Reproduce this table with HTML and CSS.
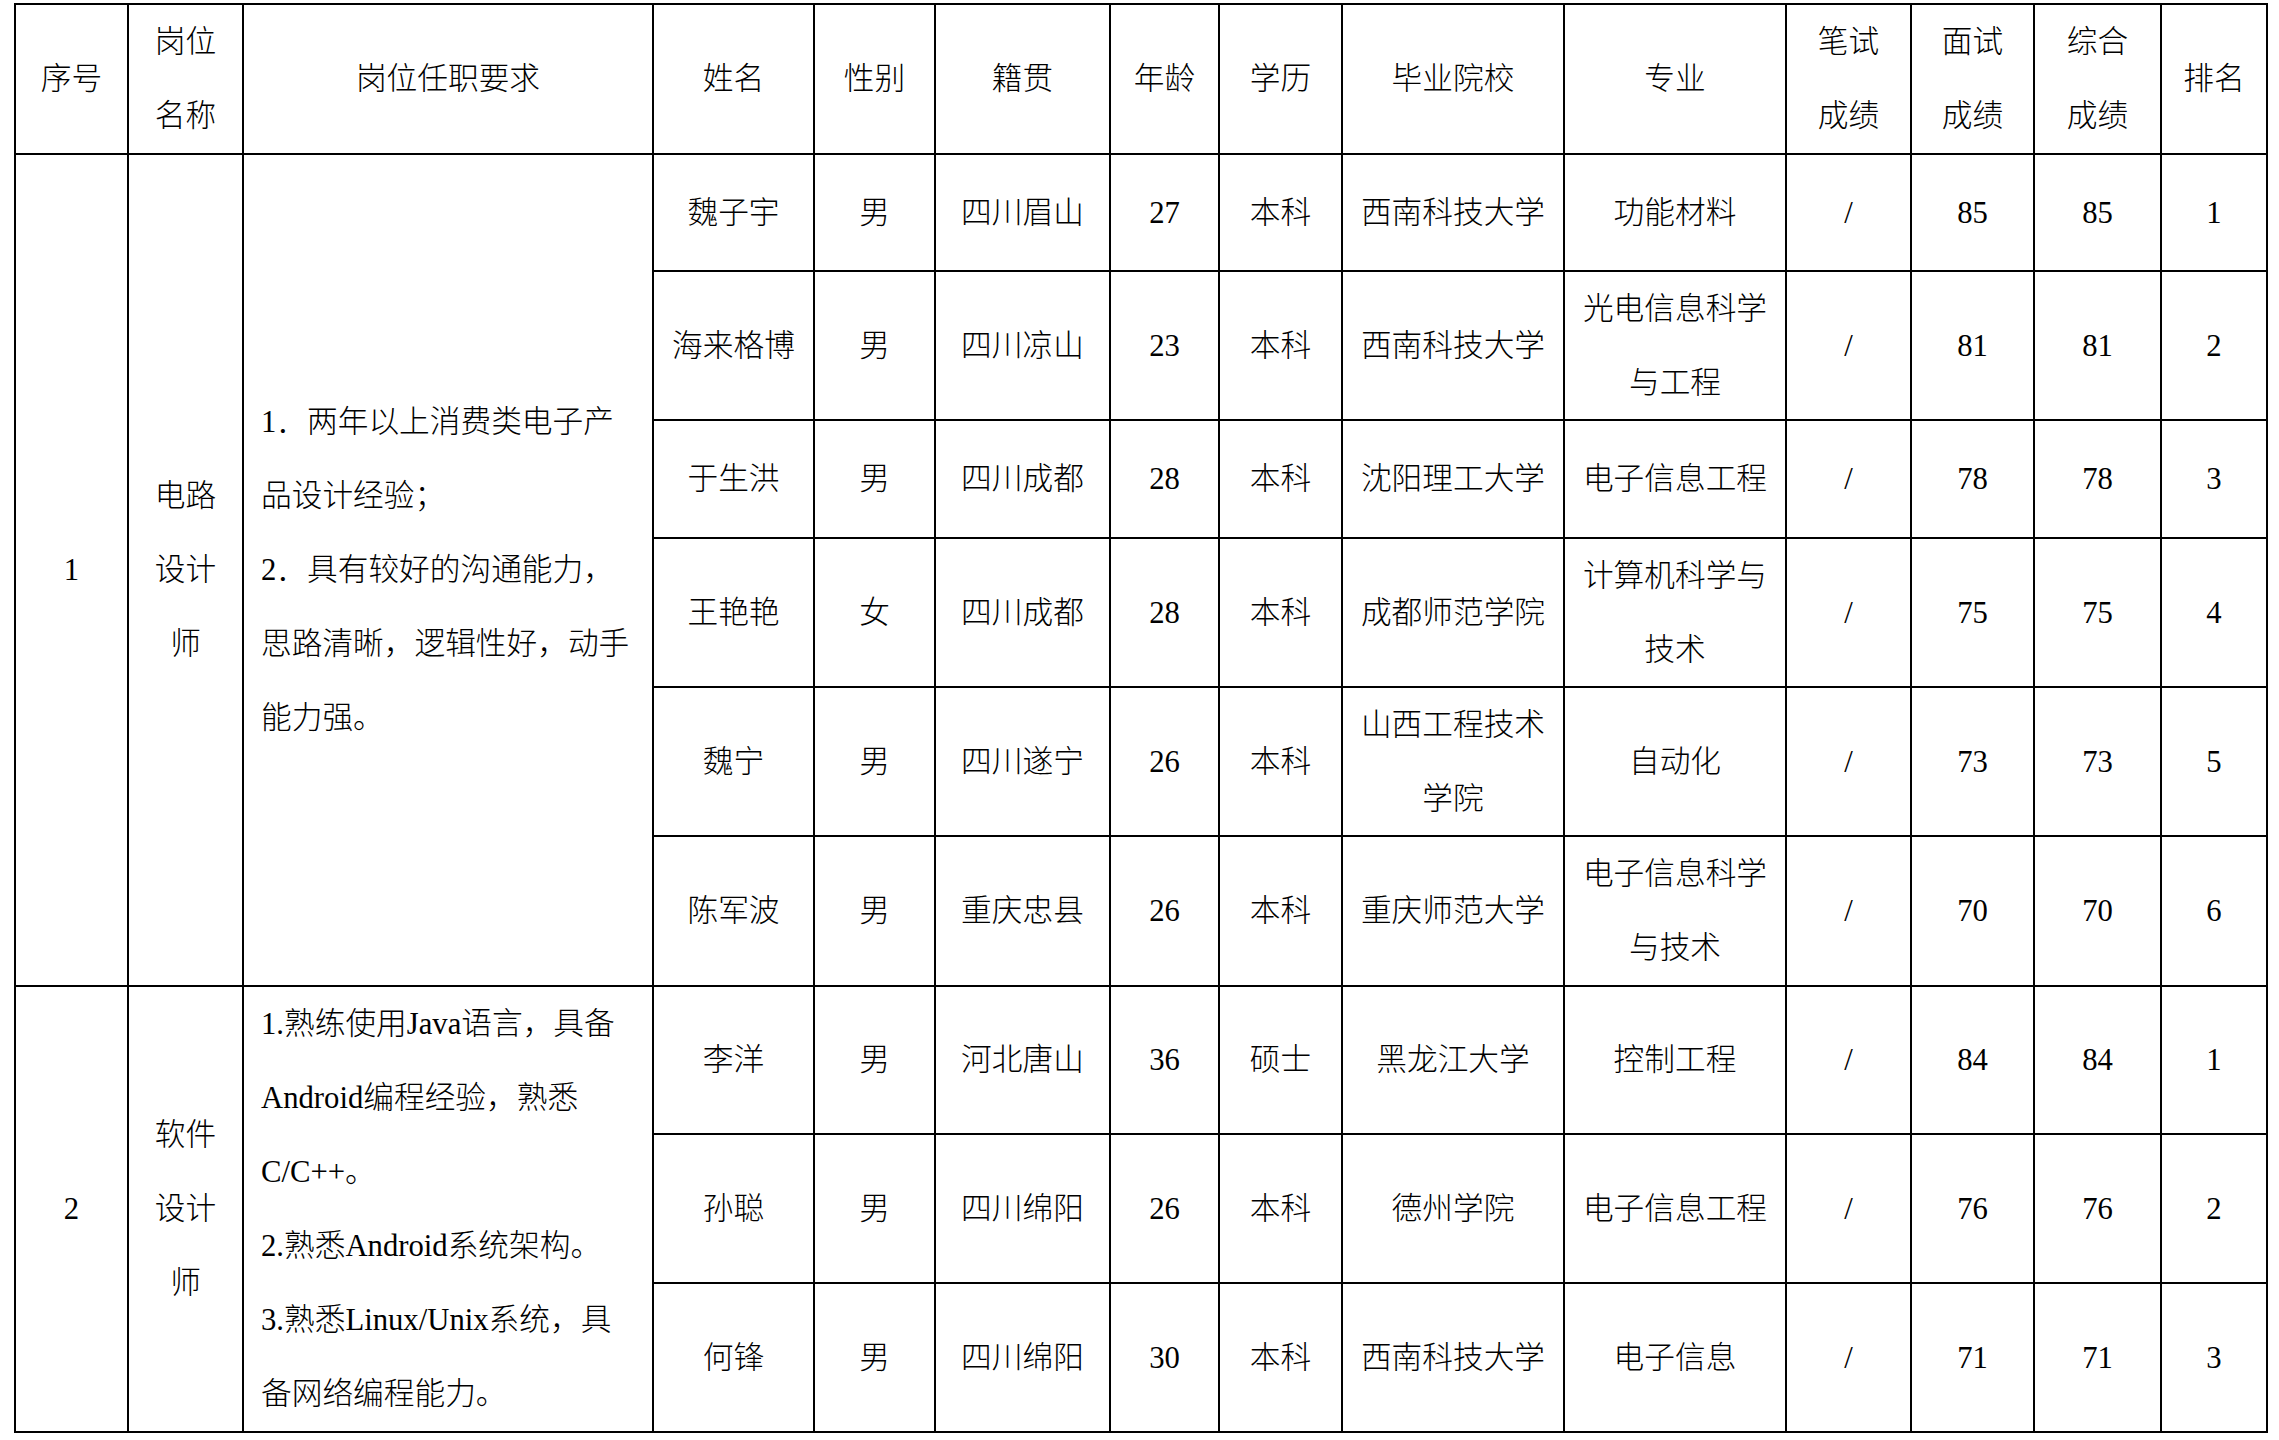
FILE: index.html
```html
<!DOCTYPE html>
<html lang="zh-CN">
<head>
<meta charset="utf-8">
<title>招聘成绩排名表</title>
<link rel="stylesheet" href="styles.css">
</head>
<body>
<div class="sheet">
  <div class="cell">序号</div>
  <div class="cell">岗位<br>名称</div>
  <div class="cell">岗位任职要求</div>
  <div class="cell">姓名</div>
  <div class="cell">性别</div>
  <div class="cell">籍贯</div>
  <div class="cell">年龄</div>
  <div class="cell">学历</div>
  <div class="cell">毕业院校</div>
  <div class="cell">专业</div>
  <div class="cell">笔试<br>成绩</div>
  <div class="cell">面试<br>成绩</div>
  <div class="cell">综合<br>成绩</div>
  <div class="cell">排名</div>

  <div class="cell span6">1</div>
  <div class="cell span6">电路<br>设计<br>师</div>
  <div class="cell span6 req">1．两年以上消费类电子产<br>品设计经验；<br>2．具有较好的沟通能力，<br>思路清晰，逻辑性好，动手<br>能力强。</div>
  <div class="cell">魏子宇</div><div class="cell">男</div><div class="cell">四川眉山</div><div class="cell">27</div><div class="cell">本科</div><div class="cell">西南科技大学</div><div class="cell">功能材料</div><div class="cell">/</div><div class="cell">85</div><div class="cell">85</div><div class="cell">1</div>
  <div class="cell">海来格博</div><div class="cell">男</div><div class="cell">四川凉山</div><div class="cell">23</div><div class="cell">本科</div><div class="cell">西南科技大学</div><div class="cell">光电信息科学<br>与工程</div><div class="cell">/</div><div class="cell">81</div><div class="cell">81</div><div class="cell">2</div>
  <div class="cell">于生洪</div><div class="cell">男</div><div class="cell">四川成都</div><div class="cell">28</div><div class="cell">本科</div><div class="cell">沈阳理工大学</div><div class="cell">电子信息工程</div><div class="cell">/</div><div class="cell">78</div><div class="cell">78</div><div class="cell">3</div>
  <div class="cell">王艳艳</div><div class="cell">女</div><div class="cell">四川成都</div><div class="cell">28</div><div class="cell">本科</div><div class="cell">成都师范学院</div><div class="cell">计算机科学与<br>技术</div><div class="cell">/</div><div class="cell">75</div><div class="cell">75</div><div class="cell">4</div>
  <div class="cell">魏宁</div><div class="cell">男</div><div class="cell">四川遂宁</div><div class="cell">26</div><div class="cell">本科</div><div class="cell">山西工程技术<br>学院</div><div class="cell">自动化</div><div class="cell">/</div><div class="cell">73</div><div class="cell">73</div><div class="cell">5</div>
  <div class="cell">陈军波</div><div class="cell">男</div><div class="cell">重庆忠县</div><div class="cell">26</div><div class="cell">本科</div><div class="cell">重庆师范大学</div><div class="cell">电子信息科学<br>与技术</div><div class="cell">/</div><div class="cell">70</div><div class="cell">70</div><div class="cell">6</div>

  <div class="cell span3">2</div>
  <div class="cell span3">软件<br>设计<br>师</div>
  <div class="cell span3 req">1.熟练使用Java语言，具备<br>Android编程经验，熟悉<br>C/C++。<br>2.熟悉Android系统架构。<br>3.熟悉Linux/Unix系统，具<br>备网络编程能力。</div>
  <div class="cell">李洋</div><div class="cell">男</div><div class="cell">河北唐山</div><div class="cell">36</div><div class="cell">硕士</div><div class="cell">黑龙江大学</div><div class="cell">控制工程</div><div class="cell">/</div><div class="cell">84</div><div class="cell">84</div><div class="cell">1</div>
  <div class="cell">孙聪</div><div class="cell">男</div><div class="cell">四川绵阳</div><div class="cell">26</div><div class="cell">本科</div><div class="cell">德州学院</div><div class="cell">电子信息工程</div><div class="cell">/</div><div class="cell">76</div><div class="cell">76</div><div class="cell">2</div>
  <div class="cell">何锋</div><div class="cell">男</div><div class="cell">四川绵阳</div><div class="cell">30</div><div class="cell">本科</div><div class="cell">西南科技大学</div><div class="cell">电子信息</div><div class="cell">/</div><div class="cell">71</div><div class="cell">71</div><div class="cell">3</div>
</div>
</body>
</html>
```

FILE: styles.css
```css
html, body {
  margin: 0;
  background: #ffffff;
}

.sheet {
  display: grid;
  width: max-content;
  grid-template-columns: 113px 115px 410px 161px 121px 175px 109px 123px 222px 222px 125px 123px 127px 106px;
  grid-template-rows: 150px 117px 149px 118px 149px 149px 150px 148px 149px 149px;
  margin: 3px 0 0 14px;
  border-left: 2px solid #000;
  border-top: 2px solid #000;
  font-family: "Liberation Serif", "Noto Sans CJK SC", serif;
  font-size: 30.7px;
  font-weight: 300;
  line-height: 74px;
  color: #000;
}

.cell {
  box-sizing: border-box;
  border-right: 2px solid #000;
  border-bottom: 2px solid #000;
  display: flex;
  align-items: center;
  justify-content: center;
  text-align: center;
  white-space: nowrap;
}

.span6 {
  grid-row: span 6;
}

.span3 {
  grid-row: span 3;
}

.req {
  justify-content: flex-start;
  text-align: left;
  padding-left: 17px;
}
```
